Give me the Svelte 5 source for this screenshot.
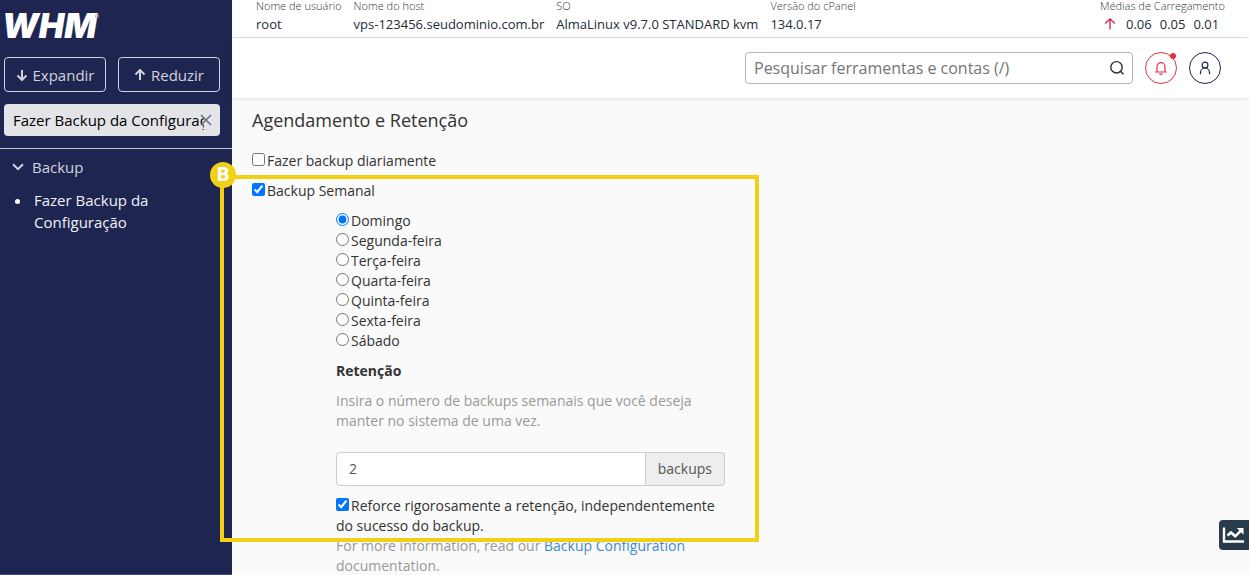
<script>
  const serverInfo = [
    { label: 'Nome de usuário', value: 'root' },
    { label: 'Nome do host', value: 'vps-123456.seudominio.com.br' },
    { label: 'SO', value: 'AlmaLinux v9.7.0 STANDARD kvm' },
    { label: 'Versão do cPanel', value: '134.0.17' },
  ];
  const loadAverages = ['0.06', '0.05', '0.01'];

  const days = [
    'Domingo',
    'Segunda-feira',
    'Terça-feira',
    'Quarta-feira',
    'Quinta-feira',
    'Sexta-feira',
    'Sábado',
  ];

  let menuFilter = $state('Fazer Backup da Configuração');
  let daily = $state(false);
  let weekly = $state(true);
  let day = $state('Domingo');
  let retention = $state('2');
  let strict = $state(true);
</script>

<div class="layout">
  <aside class="sidebar">
    <a class="logo" href="#home" aria-label="WHM">
      <svg width="96" height="28" viewBox="0 0 96 28">
        <text class="logo-text" x="-2" y="26">WHM</text>
        <circle cx="93" cy="4" r="1.6" fill="none" stroke="#a5a8ba" stroke-width="0.8" />
      </svg>
    </a>

    <div class="tree-actions">
      <button type="button">
        <svg width="12" height="12" viewBox="0 0 12 12"><path d="M6 1v10M1.500 6.500 6 11l4.500-4.500" /></svg>
        Expandir
      </button>
      <button type="button">
        <svg width="12" height="12" viewBox="0 0 12 12"><path d="M6 11V1M1.500 5.500 6 1l4.500 4.500" /></svg>
        Reduzir
      </button>
    </div>

    <div class="filter">
      <input type="text" aria-label="Pesquisar no menu" bind:value={menuFilter} />
      <button type="button" aria-label="Limpar" onclick={() => (menuFilter = '')}>
        <svg width="12" height="12" viewBox="0 0 12 12"><path d="M1 1l10 10M11 1L1 11" /></svg>
      </button>
    </div>

    <nav class="menu">
      <button type="button" class="menu-group">
        <svg width="12" height="8" viewBox="0 0 12 8"><path d="M1 1.200 6 6.200l5-5" /></svg>
        Backup
      </button>
      <ul>
        <li><a href="#backup-config">Fazer Backup da Configuração</a></li>
      </ul>
    </nav>
  </aside>

  <div class="page">
    <div class="stats">
      {#each serverInfo as item}
        <div class="stat">
          <span class="stat-label">{item.label}</span>
          <span class="stat-value">{item.value}</span>
        </div>
      {/each}
      <div class="stat load">
        <span class="stat-label">Médias de Carregamento</span>
        <span class="stat-value load-values">
          <svg width="12" height="12" viewBox="0 0 12 12"><path d="M6 11.500V1M1.200 5.600 6 0.900l4.800 4.700" /></svg>
          {#each loadAverages as avg}
            <span>{avg}</span>
          {/each}
        </span>
      </div>
    </div>

    <header class="toolbar">
      <div class="search">
        <input type="text" aria-label="Pesquisar" placeholder="Pesquisar ferramentas e contas (/)" />
        <button type="button" aria-label="Pesquisar">
          <svg width="16" height="16" viewBox="0 0 16 16">
            <circle cx="7.500" cy="7.300" r="5.700" />
            <path d="M11.600 11.400 14.500 14.300" />
          </svg>
        </button>
      </div>
      <button type="button" class="round alert" aria-label="Notificações">
        <svg width="14" height="14" viewBox="0 0 14 14">
          <path d="M1.300 11h11.400M3 11V5.700a4 4 0 0 1 8 0V11M5.300 13.200h3.400" />
        </svg>
        <span class="dot"></span>
      </button>
      <button type="button" class="round" aria-label="Conta">
        <svg width="14" height="14" viewBox="0 0 14 14">
          <circle cx="7" cy="4" r="2.900" />
          <path d="M2.500 13.200V11.500a4.500 4.500 0 0 1 9 0v1.700" />
        </svg>
      </button>
    </header>

    <main class="content">
      <h1>Agendamento e Retenção</h1>

      <label class="option daily"><input type="checkbox" bind:checked={daily} />Fazer backup diariamente</label>

      <section class="weekly">
        <label class="option"><input type="checkbox" bind:checked={weekly} />Backup Semanal</label>

        <div class="weekly-body">
          <div class="days" role="radiogroup" aria-label="Dia da semana">
            {#each days as name}
              <label class="option"><input type="radio" name="day" value={name} bind:group={day} />{name}</label>
            {/each}
          </div>

          <label class="retention-title" for="retention">Retenção</label>
          <p class="help">Insira o número de backups semanais que você deseja manter no sistema de uma vez.</p>
          <div class="input-group">
            <input id="retention" type="text" bind:value={retention} />
            <span>backups</span>
          </div>

          <label class="option"><input type="checkbox" bind:checked={strict} />Reforce rigorosamente a retenção, independentemente do sucesso do backup.</label>
          <p class="help">For more information, read our <a href="#docs">Backup Configuration</a> documentation.</p>
        </div>

        <div class="marker"><span>B</span></div>
      </section>
    </main>
  </div>

  <button type="button" class="stats-tab" aria-label="Estatísticas">
    <svg width="24" height="18" viewBox="0 0 24 18">
      <path d="M2 1.500V15.500H22" stroke-width="2.400" />
      <path d="M5.500 9.500 9 6.500l4.200 3.800 5.500-5.500" stroke-width="2.600" />
      <path class="head" d="M14.800 2H21.500V8.700Z" />
    </svg>
  </button>
</div>

<style>
  :global(body) {
    margin: 0;
    background: #fafafa;
  }

  .layout {
    display: flex;
    height: 100vh;
    overflow: hidden;
    font-family: 'Open Sans', sans-serif;
    font-size: 14px;
    line-height: 20px;
    color: #333;
  }

  button,
  input {
    box-sizing: border-box;
    font: inherit;
  }

  button {
    padding: 0;
    background: none;
    border: 0;
    color: inherit;
    cursor: pointer;
  }

  svg {
    display: block;
    flex: none;
    fill: none;
    stroke: currentColor;
  }

  .sidebar {
    box-sizing: border-box;
    flex: 0 0 232px;
    min-width: 0;
    padding-top: 12px;
    background: #1f2551;
    border-bottom: 1px solid #4b4f74;
    color: #d2d3dc;
    font-size: 15px;
  }

  .logo {
    display: block;
    margin-left: 4px;
  }

  .logo svg {
    overflow: visible;
  }

  .logo-text {
    fill: #fff;
    stroke: none;
    font: italic 900 34px Inter, sans-serif;
  }

  .tree-actions {
    display: grid;
    grid-template-columns: 1fr 1fr;
    gap: 12px;
    padding: 17px 12px 12px 4px;
  }

  .tree-actions button {
    display: flex;
    align-items: center;
    justify-content: center;
    gap: 5px;
    min-width: 0;
    height: 35px;
    border: 1px solid #d2d3dc;
    border-radius: 4px;
  }

  .tree-actions svg,
  .menu-group svg {
    stroke-width: 2;
  }

  .filter {
    display: flex;
    align-items: center;
    height: 32px;
    margin: 0 12px 12px 4px;
    padding: 0 8px 0 9px;
    box-sizing: border-box;
    background: #e3e4e8;
    border-radius: 4px;
  }

  .filter input {
    flex: 1;
    min-width: 0;
    height: 32px;
    margin-right: -4px;
    padding: 0;
    background: none;
    border: 0;
    color: #000;
  }

  .filter button {
    color: #6c757d;
  }

  .filter svg {
    stroke-width: 1.6;
  }

  .menu {
    padding: 7px 12px;
    border-top: 1px solid #c5c6d1;
  }

  .menu-group {
    display: flex;
    align-items: center;
    gap: 8px;
    height: 22px;
  }

  .menu ul {
    margin: 11px 0 0;
    padding-left: 20px;
    line-height: 22px;
    color: #fff;
  }

  .menu li {
    max-width: 150px;
    padding-left: 2px;
  }

  .menu a {
    color: #f1f1f5;
    text-decoration: none;
  }

  .page {
    flex: 1;
    min-width: 0;
    background: #fafafa;
  }

  .stats {
    display: flex;
    gap: 12px;
    padding: 0 24px 1px;
    background: #fff;
    border-bottom: 1px solid #dee2e6;
  }

  .stat {
    display: flex;
    flex-direction: column;
    white-space: nowrap;
  }

  .stat-label {
    font-size: 11px;
    line-height: 12px;
    font-weight: 300;
    color: #343a40;
  }

  .stat-value {
    font-size: 13px;
    line-height: 24px;
    color: #212c3a;
  }

  .load {
    margin-left: auto;
  }

  .load-values {
    display: flex;
    align-items: center;
    gap: 8px;
    padding-left: 4px;
  }

  .load-values svg {
    margin-right: 2px;
    color: #dc2f55;
    stroke-width: 1.4;
  }

  .toolbar {
    display: flex;
    align-items: center;
    justify-content: flex-end;
    gap: 12px;
    height: 60px;
    padding-right: 28px;
    background: #fff;
    box-shadow: 0 1px 4px rgba(0, 0, 0, 0.1);
  }

  .search {
    display: flex;
    align-items: center;
    box-sizing: border-box;
    width: 388px;
    height: 32px;
    padding: 0 7px 0 8px;
    border: 1px solid #b4b4c6;
    border-radius: 4px;
  }

  .search input {
    flex: 1;
    min-width: 0;
    padding: 0;
    border: 0;
    font-size: 16px;
  }

  .search input::placeholder {
    color: #757575;
  }

  .search svg {
    color: #24343c;
    stroke-width: 1.4;
  }

  .round {
    position: relative;
    display: flex;
    align-items: center;
    justify-content: center;
    width: 32px;
    height: 32px;
    border: 1px solid #1f2551;
    border-radius: 50%;
    color: #1f2551;
  }

  .round svg {
    stroke-width: 1.2;
  }

  .round.alert {
    border-color: #dc3545;
    color: #dc3545;
  }

  .dot {
    position: absolute;
    top: 0;
    right: 0;
    width: 6px;
    height: 6px;
    background: #dc3545;
    border-radius: 50%;
  }

  .content {
    padding: 10px 20px 0;
  }

  h1 {
    margin: 0;
    font-size: 18px;
    line-height: 24px;
    font-weight: 400;
  }

  .option {
    display: block;
  }

  .option input {
    width: 13px;
    height: 13px;
    margin: 0 2px 0 0;
  }

  .daily {
    margin: 19px 0 10px;
  }

  .weekly {
    position: relative;
  }

  .weekly-body {
    max-width: 389px;
    margin: 10px 0 0 84px;
  }

  .retention-title {
    display: block;
    margin: 10px 0;
    font-weight: 700;
  }

  .help {
    margin: 0;
    color: #999;
  }

  .help a {
    color: #428bca;
    text-decoration: none;
  }

  .input-group {
    display: flex;
    height: 34px;
    margin: 21px 0 10px;
  }

  .input-group input {
    flex: 1;
    min-width: 0;
    padding: 0 12px;
    background: #fff;
    border: 1px solid #ccc;
    border-radius: 4px 0 0 4px;
    color: #555;
  }

  .input-group span {
    padding: 6px 12px;
    background: #eee;
    border: 1px solid #ccc;
    border-left: 0;
    border-radius: 0 4px 4px 0;
    color: #555;
    box-sizing: border-box;
  }

  /* yellow frame laid over the weekly options */
  .marker {
    position: absolute;
    top: -6px;
    left: -32px;
    box-sizing: border-box;
    width: 539px;
    height: 367px;
    border: 4px solid #f2d016;
    pointer-events: none;
  }

  .marker span {
    position: absolute;
    top: -17px;
    left: -14px;
    width: 26px;
    height: 26px;
    background: #f2d016;
    border-radius: 50%;
    color: #fff;
    font-size: 20px;
    line-height: 24px;
    font-weight: 700;
    text-align: center;
  }

  .stats-tab {
    position: fixed;
    right: 0;
    bottom: 25px;
    display: flex;
    align-items: center;
    justify-content: center;
    width: 30px;
    height: 30px;
    background: #293a4a;
    border-radius: 4px 0 0 4px;
    color: #fff;
  }

  .stats-tab .head {
    fill: currentColor;
    stroke: none;
  }
</style>
